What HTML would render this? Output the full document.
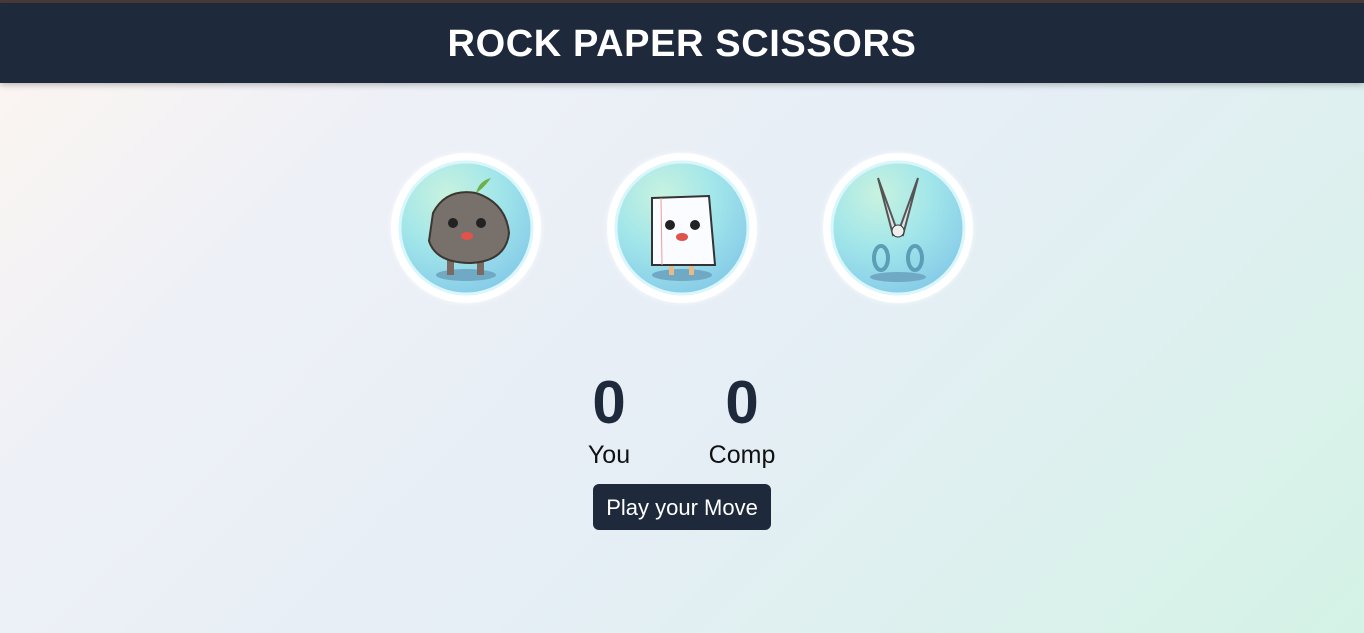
<!DOCTYPE html>
<html><head><meta charset="utf-8"><style>
*{margin:0;padding:0;box-sizing:border-box}
body{width:1364px;height:633px;overflow:hidden;font-family:"Liberation Sans",sans-serif;background:linear-gradient(135deg,#fdf6f0 0%,#eef0f7 25%,#e6eef6 55%,#d4f3e6 100%);position:relative}
.top{position:absolute;top:0;left:0;width:100%;height:3px;background:#4b3a38}
header{position:absolute;top:3px;left:0;width:100%;height:80px;background:#1e293b;box-shadow:0 2px 6px rgba(0,0,0,.25);color:#fff;text-align:center;font-weight:bold;font-size:38px;line-height:82px;letter-spacing:0.6px}
.c{position:absolute;top:153px;width:150px;height:150px;border-radius:50%;background:#fff;box-shadow:0 0 6px rgba(255,255,255,.8)}
.c svg{position:absolute;left:0;top:0}
.num{position:absolute;top:368px;font-size:60px;font-weight:bold;color:#1e293b;width:100px;text-align:center}
.lab{position:absolute;top:441px;font-size:25px;color:#111;width:120px;text-align:center}
.btn{position:absolute;left:593px;top:484px;width:178px;height:46px;background:#1e293b;border-radius:6px;color:#fff;font-size:22px;line-height:48px;text-align:center}
</style></head><body>
<div class="top"></div>
<header>ROCK PAPER SCISSORS</header>
<svg width="0" height="0"><defs><radialGradient id="g" cx="35%" cy="25%" r="80%"><stop offset="0" stop-color="#c8f2df"/><stop offset=".5" stop-color="#a2e6ea"/><stop offset="1" stop-color="#86cbe8"/></radialGradient></defs></svg>
<div class="c" style="left:391px"><svg width="150" height="150"><circle cx="75" cy="75" r="66" fill="url(#g)" stroke="#d8f6fb" stroke-width="3"/><ellipse cx="75" cy="122" rx="30" ry="6" fill="#6fa9c4"/><rect x="56" y="104" width="7" height="18" fill="#7a6a62"/><rect x="86" y="104" width="7" height="18" fill="#7a6a62"/><path d="M42 60 Q55 35 85 40 Q115 50 118 80 Q115 108 80 110 Q45 110 38 88Z" fill="#78706b" stroke="#3d3530" stroke-width="2"/><path d="M85 40 Q88 28 100 25 Q92 36 85 40" fill="#6cb04a"/><circle cx="62" cy="70" r="5" fill="#222"/><circle cx="90" cy="70" r="5" fill="#222"/><ellipse cx="76" cy="83" rx="6" ry="4" fill="#e0534a"/></svg></div>
<div class="c" style="left:607px"><svg width="150" height="150"><circle cx="75" cy="75" r="66" fill="url(#g)" stroke="#d8f6fb" stroke-width="3"/><ellipse cx="75" cy="122" rx="30" ry="6" fill="#6fa9c4"/><rect x="62" y="105" width="5" height="17" fill="#e8b98a"/><rect x="82" y="105" width="5" height="17" fill="#e8b98a"/><path d="M45 45 L102 43 L108 112 L45 112Z" fill="#fafcff" stroke="#333" stroke-width="2"/><line x1="54" y1="45" x2="55" y2="112" stroke="#f29a9a"/><circle cx="63" cy="72" r="5" fill="#222"/><circle cx="88" cy="72" r="5" fill="#222"/><ellipse cx="75" cy="84" rx="6" ry="4" fill="#e0534a"/></svg></div>
<div class="c" style="left:823px"><svg width="150" height="150"><circle cx="75" cy="75" r="66" fill="url(#g)" stroke="#d8f6fb" stroke-width="3"/><ellipse cx="75" cy="124" rx="28" ry="5" fill="#6fa9c4"/><path d="M55 25 L75 80 L70 82Z M95 25 L75 80 L80 82Z" fill="#dde3ea" stroke="#555" stroke-width="2"/><circle cx="75" cy="78" r="6" fill="#eee" stroke="#333"/><ellipse cx="58" cy="105" rx="7" ry="12" fill="none" stroke="#5a9fb5" stroke-width="4"/><ellipse cx="92" cy="105" rx="7" ry="12" fill="none" stroke="#5a9fb5" stroke-width="4"/></svg></div>
<div class="num" style="left:559px">0</div>
<div class="num" style="left:692px">0</div>
<div class="lab" style="left:549px">You</div>
<div class="lab" style="left:682px">Comp</div>
<div class="btn">Play your Move</div>
</body></html>
